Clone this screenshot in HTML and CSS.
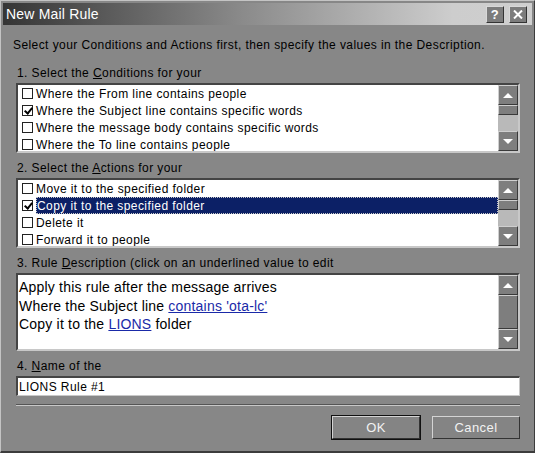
FILE: index.html
```html
<!DOCTYPE html>
<html lang="en">
<head>
  <meta charset="UTF-8" />
  <title>New Mail Rule</title>
  <link rel="stylesheet" href="styles.css">
</head>
<body>
  <div class="window">
    <!-- Title bar -->
    <div class="titlebar">
      <span class="title">New Mail Rule</span>
      <div class="title-buttons">
        <span class="tbtn help">?</span>
        <span class="tbtn close">
          <svg width="10" height="9" viewBox="0 0 10 9"><path d="M1 0.5 L9 8.5 M9 0.5 L1 8.5" stroke="#fff" stroke-width="2"/></svg>
        </span>
      </div>
    </div>

    <div class="content">
      <p class="intro">Select your Conditions and Actions first, then specify the values in the Description.</p>

      <!-- Conditions -->
      <div class="label">1. Select the <u>C</u>onditions for your</div>
      <div class="listbox">
        <ul class="items">
          <li><span class="check"></span>Where the From line contains people</li>
          <li><span class="check checked"></span>Where the Subject line contains specific words</li>
          <li><span class="check"></span>Where the message body contains specific words</li>
          <li><span class="check"></span>Where the To line contains people</li>
        </ul>
        <div class="scrollbar">
          <div class="sb-btn"><span class="arrow-up"></span></div>
          <div class="sb-thumb small"></div>
          <div class="sb-track"></div>
          <div class="sb-btn"><span class="arrow-down"></span></div>
        </div>
      </div>

      <!-- Actions -->
      <div class="label">2. Select the <u>A</u>ctions for your</div>
      <div class="listbox">
        <ul class="items">
          <li><span class="check"></span>Move it to the specified folder</li>
          <li><span class="check checked"></span><span class="selected">Copy it to the specified folder</span></li>
          <li><span class="check"></span>Delete it</li>
          <li><span class="check"></span>Forward it to people</li>
        </ul>
        <div class="scrollbar">
          <div class="sb-btn"><span class="arrow-up"></span></div>
          <div class="sb-thumb small"></div>
          <div class="sb-track"></div>
          <div class="sb-btn"><span class="arrow-down"></span></div>
        </div>
      </div>

      <!-- Description -->
      <div class="label">3. Rule <u>D</u>escription (click on an underlined value to edit</div>
      <div class="listbox desc">
        <div class="desc-text">
          <div>Apply this rule after the message arrives</div>
          <div>Where the Subject line <a href="#">contains 'ota-lc'</a></div>
          <div>Copy it to the <a href="#">LIONS</a> folder</div>
        </div>
        <div class="scrollbar">
          <div class="sb-btn"><span class="arrow-up"></span></div>
          <div class="sb-thumb large"></div>
          <div class="sb-btn"><span class="arrow-down"></span></div>
        </div>
      </div>

      <!-- Name -->
      <div class="label">4. <u>N</u>ame of the</div>
      <input class="name-input" type="text" value="LIONS Rule #1">

      <div class="separator"></div>

      <div class="actions">
        <button class="btn default">OK</button>
        <button class="btn">Cancel</button>
      </div>
    </div>
  </div>
</body>
</html>
```

FILE: styles.css
```css
body {
  margin: 0;
  background: #878787;
}
.window {
  box-sizing: border-box;
  width: 535px;
  height: 453px;
  background: #878787;
  border-top: 1px solid #c4c4c4;
  border-left: 1px solid #c4c4c4;
  border-right: 1px solid #3c3c3c;
  border-bottom: 2px solid #3c3c3c;
  padding: 2px;
  font-family: "Liberation Sans", Arial, sans-serif;
  font-size: 12px;
  letter-spacing: 0.42px;
  color: #000;
}
/* Title bar */
.titlebar {
  height: 22px;
  display: flex;
  align-items: center;
  justify-content: space-between;
  padding: 0 5px 0 3px;
  background: linear-gradient(to right, #353535 0%, #8a8a8a 45%, #cdcdcd 85%, #cfcfcf 100%);
}
.title {
  color: #fff;
  font-size: 14px;
  letter-spacing: 0.2px;
}
.title-buttons {
  display: flex;
  gap: 5px;
}
.tbtn {
  box-sizing: border-box;
  width: 18px;
  height: 17px;
  display: flex;
  align-items: center;
  justify-content: center;
  background: #7c7c7c;
  border-top: 1px solid #d8d8d8;
  border-left: 1px solid #d8d8d8;
  border-right: 1px solid #333;
  border-bottom: 1px solid #333;
  color: #fff;
  font-weight: bold;
  font-size: 13px;
}
/* Body */
.content {
  padding: 0 12px 0 13px;
}
.intro {
  margin: 13px 0 0 -3px;
  line-height: 14px;
  white-space: nowrap;
}
.label {
  line-height: 14px;
  margin: 8px 0 3px 1px;
  white-space: nowrap;
}
.intro + .label {
  margin-top: 14px;
}
.listbox {
  box-sizing: border-box;
  height: 70px;
  display: flex;
  background: #fff;
  border-top: 2px solid #444;
  border-left: 2px solid #444;
  border-right: 2px solid #c8c8c8;
  border-bottom: 2px solid #c8c8c8;
  overflow: hidden;
}
.items {
  flex: 1;
  list-style: none;
  margin: 0;
  padding: 0;
  overflow: hidden;
}
.items li {
  height: 17px;
  display: flex;
  align-items: center;
  white-space: nowrap;
}
.check {
  box-sizing: border-box;
  width: 11px;
  height: 11px;
  margin: 0 3px 0 4px;
  border: 1px solid #222;
  background: #fff;
  flex: none;
  position: relative;
}
.check.checked::after {
  content: "";
  position: absolute;
  left: 3px;
  top: 0;
  width: 3px;
  height: 6px;
  border-right: 2px solid #000;
  border-bottom: 2px solid #000;
  transform: rotate(40deg);
}
.selected {
  flex: 1;
  align-self: stretch;
  display: flex;
  align-items: center;
  padding-left: 1px;
  background: #0c2066;
  color: #fff;
  outline: 1px dotted #c8c8c8;
  outline-offset: -1px;
}
/* Scrollbar */
.scrollbar {
  width: 20px;
  flex: none;
  display: flex;
  flex-direction: column;
  background: #b9b9b9;
}
.sb-btn,
.sb-thumb {
  box-sizing: border-box;
  background: #7e7e7e;
  border-top: 1px solid #cfcfcf;
  border-left: 1px solid #cfcfcf;
  border-right: 1px solid #3a3a3a;
  border-bottom: 1px solid #3a3a3a;
}
.sb-btn {
  height: 20px;
  display: flex;
  align-items: center;
  justify-content: center;
}
.sb-thumb.small {
  height: 10px;
}
.sb-thumb.large {
  flex: 1;
}
.sb-track {
  flex: 1;
}
.arrow-up {
  width: 0;
  height: 0;
  border-left: 5px solid transparent;
  border-right: 5px solid transparent;
  border-bottom: 5px solid #fff;
}
.arrow-down {
  width: 0;
  height: 0;
  border-left: 5px solid transparent;
  border-right: 5px solid transparent;
  border-top: 5px solid #fff;
}
/* Description */
.listbox.desc {
  height: 78px;
}
.desc-text {
  flex: 1;
  padding: 3px 0 0 1px;
  font-size: 14px;
  letter-spacing: 0.2px;
  line-height: 18.5px;
  white-space: nowrap;
}
.desc-text a {
  color: #1a2aa8;
}
/* Name input */
.name-input {
  display: block;
  box-sizing: border-box;
  width: 100%;
  height: 20px;
  margin: 0;
  padding: 0 1px;
  font-family: "Liberation Sans", Arial, sans-serif;
  font-size: 12px;
  letter-spacing: 0.42px;
  color: #000;
  background: #fff;
  border-top: 2px solid #444;
  border-left: 2px solid #444;
  border-right: 1px solid #c8c8c8;
  border-bottom: 1px solid #c8c8c8;
  outline: none;
}
.separator {
  margin-top: 8px;
  height: 0;
  border-top: 1px solid #555;
  border-bottom: 1px solid #c8c8c8;
}
.actions {
  display: flex;
  justify-content: flex-end;
  gap: 12px;
  margin-top: 10px;
}
.btn {
  box-sizing: border-box;
  width: 88px;
  height: 23px;
  background: #848484;
  border-top: 1px solid #d4d4d4;
  border-left: 1px solid #d4d4d4;
  border-right: 1px solid #333;
  border-bottom: 1px solid #333;
  color: #f2f2f2;
  font-family: "Liberation Sans", Arial, sans-serif;
  font-size: 13px;
  letter-spacing: 0.4px;
  padding: 0;
}
.btn.default {
  outline: 1px solid #111;
}
```
